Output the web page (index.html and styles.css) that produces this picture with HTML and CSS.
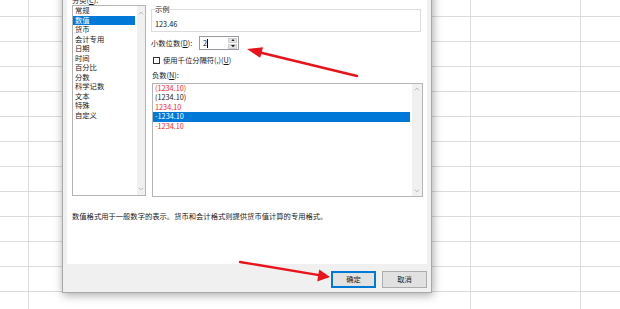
FILE: index.html
```html
<!DOCTYPE html>
<html lang="zh-CN">
<head>
<meta charset="utf-8">
<title>设置单元格格式</title>
<link rel="stylesheet" href="styles.css">
</head>
<body>
<div class="dialog">
  <div class="panel">
    <div class="main">
      <div class="cat">
        <div class="lbl">分类(<u>C</u>):</div>
        <div class="listbox cat-list">
          <ul class="items">
            <li>常规</li>
            <li class="sel">数值</li>
            <li>货币</li>
            <li>会计专用</li>
            <li>日期</li>
            <li>时间</li>
            <li>百分比</li>
            <li>分数</li>
            <li>科学记数</li>
            <li>文本</li>
            <li>特殊</li>
            <li>自定义</li>
          </ul>
          <div class="scroll">
            <svg class="chev" viewBox="0 0 7 5"><path d="M1 4 L3.5 1.5 L6 4"/></svg>
            <svg class="chev" viewBox="0 0 7 5"><path d="M1 1 L3.5 3.5 L6 1"/></svg>
          </div>
        </div>
      </div>
      <div class="opts">
        <fieldset class="sample">
          <legend>示例</legend>
          <div class="sample-val">123.46</div>
        </fieldset>
        <div class="row dec">
          <span class="dec-lbl">小数位数(<u>D</u>):</span>
          <div class="spin">
            <span class="val">2<i class="caret"></i></span>
            <span class="btns">
              <b class="sbtn"><svg viewBox="0 0 5 3"><path d="M0 3 L2.5 0 L5 3Z"/></svg></b>
              <b class="sbtn"><svg viewBox="0 0 5 3"><path d="M0 0 L2.5 3 L5 0Z"/></svg></b>
            </span>
          </div>
        </div>
        <div class="row chk">
          <span class="box"></span>
          <span>使用千位分隔符(,)(<u>U</u>)</span>
        </div>
        <div class="neg-lbl">负数(<u>N</u>):</div>
        <div class="listbox neg-list">
          <ul class="items">
            <li class="red">(1234.10)</li>
            <li>(1234.10)</li>
            <li class="red">1234.10</li>
            <li class="sel">-1234.10</li>
            <li class="red">-1234.10</li>
          </ul>
          <div class="scroll">
            <svg class="chev" viewBox="0 0 7 5"><path d="M1 4 L3.5 1.5 L6 4"/></svg>
            <svg class="chev" viewBox="0 0 7 5"><path d="M1 1 L3.5 3.5 L6 1"/></svg>
          </div>
        </div>
      </div>
    </div>
    <p class="desc">数值格式用于一般数字的表示。货币和会计格式则提供货币值计算的专用格式。</p>
  </div>
  <div class="footer">
    <button class="btn default">确定</button>
    <button class="btn">取消</button>
  </div>
</div>
<svg class="arrows" viewBox="0 0 620 309">
  <line x1="357" y1="76" x2="258" y2="52" class="ln"/>
  <polygon points="247,49 263,47.2 260.2,57.8" class="hd"/>
  <line x1="240" y1="262" x2="322" y2="275.6" class="ln"/>
  <polygon points="330,277 319.2,269.4 317.2,281.4" class="hd"/>
</svg>
</body>
</html>
```

FILE: styles.css
```css
* { box-sizing: border-box; }
html, body {
  margin: 0;
  padding: 0;
  width: 620px;
  height: 309px;
  overflow: hidden;
}
body {
  position: relative;
  font-family: "Noto Sans CJK SC", "Noto Sans", sans-serif;
  font-size: 7.3px;
  color: #1a1a1a;
  background-color: #fff;
  background-image:
    linear-gradient(#dcdcdc, #dcdcdc),
    linear-gradient(#dcdcdc, #dcdcdc),
    linear-gradient(#dcdcdc, #dcdcdc),
    linear-gradient(to bottom, transparent 24px, #dcdcdc 24px);
  background-size: 1px 100%, 1px 100%, 1px 100%, 100% 25px;
  background-position: 28px 0, 470px 0, 580px 0, 0 -8px;
  background-repeat: no-repeat, no-repeat, no-repeat, repeat-y;
}
u { text-decoration: underline; text-underline-offset: 1px; }

.dialog {
  position: absolute;
  left: 62px;
  top: -14px;
  width: 370px;
  height: 307px;
  background: #f0f0f0;
  border: 1px solid #a8a8a8;
  box-shadow: 1px 2px 9px rgba(0, 0, 0, 0.35);
  display: flex;
  flex-direction: column;
}
.panel {
  margin: 0 4px;
  height: 277px;
  background: #fff;
  padding: 8px 4px 0 5px;
}
.main {
  display: flex;
  align-items: flex-start;
  gap: 5px;
}
.cat { width: 74px; }
.lbl { height: 10px; line-height: 10px; }

.listbox {
  display: flex;
  border: 1px solid #b4b4b4;
  background: #fff;
}
.cat-list { height: 191px; }
.items {
  list-style: none;
  margin: 0 2px 0 0;
  padding: 0;
  flex: 1;
}
.items li {
  height: 9.5px;
  line-height: 9.5px;
  padding-left: 2px;
  white-space: nowrap;
}
.items li.sel { background: #0078d7; color: #fff; }
.items li.red { color: #ff1f1f; }
.scroll {
  width: 8px;
  background: #f0f0f0;
  display: flex;
  flex-direction: column;
  justify-content: space-between;
  align-items: center;
  padding: 5px 0 4px;
}
.neg-list .scroll { width: 10px; padding: 3px 0 3px; }
.chev { width: 6px; height: 4px; }
.chev path { fill: none; stroke: #a6a6a6; stroke-width: 1; }

.opts {
  width: 272px;
  display: flex;
  flex-direction: column;
  padding-top: 10px;
}
.sample {
  margin: 0 2px 0 0;
  padding: 0 3px 2px 3px;
  border: 1px solid #dcdcdc;
  min-width: 0;
}
.sample legend {
  padding: 0;
  line-height: 8px;
  height: 8px;
}
.sample-val { margin-top: 6px; line-height: 10px; height: 10px; }

.row { display: flex; align-items: center; }
.dec { margin-top: 4px; height: 14px; }
.dec-lbl { width: 48px; line-height: 10px; }
.spin {
  width: 40px;
  height: 14px;
  border: 1px solid #9a9aa2;
  display: flex;
  align-items: center;
  justify-content: space-between;
  padding: 0 1px 0 3px;
}
.val { display: flex; align-items: center; line-height: 10px; }
.caret {
  display: block;
  width: 1px;
  height: 9px;
  background: #000;
  margin-left: 0;
}
.btns {
  display: flex;
  flex-direction: column;
  gap: 1px;
  width: 9px;
}
.sbtn {
  height: 5px;
  background: #e5e5e5;
  border: 1px solid #cfcfcf;
  display: flex;
  align-items: center;
  justify-content: center;
}
.sbtn svg { width: 4px; height: 2.5px; }
.sbtn path { fill: #222; }

.chk { margin-top: 5px; height: 10px; line-height: 10px; gap: 3px; }
.box {
  width: 7px;
  height: 7px;
  margin-left: 2px;
  border: 1px solid #333;
  background: #fff;
}
.neg-lbl { margin-top: 5px; height: 10px; line-height: 10px; padding-left: 1px; }
.neg-list {
  margin: 3px 0 0 1px;
  width: 271px;
  height: 114px;
}
.neg-list .items li { height: 9.4px; line-height: 9.4px; }

.desc {
  margin: 14px 0 0;
  height: 10px;
  line-height: 10px;
  white-space: nowrap;
}

.footer {
  flex: 1;
  display: flex;
  justify-content: flex-end;
  align-items: flex-start;
  gap: 6px;
  padding: 7px 4px 0 0;
}
.btn {
  width: 45px;
  height: 17px;
  padding: 0;
  font: inherit;
  color: #1a1a1a;
  background: #e1e1e1;
  border: 1px solid #adadad;
  line-height: 15px;
}
.btn.default { border: 1px solid #0078d7; box-shadow: inset 0 0 0 1px #0078d7; }

.arrows {
  position: absolute;
  left: 0;
  top: 0;
  width: 620px;
  height: 309px;
  pointer-events: none;
}
.arrows .ln { stroke: #e8141b; stroke-width: 2.4; stroke-linecap: round; }
.arrows .hd { fill: #e8141b; }
```
